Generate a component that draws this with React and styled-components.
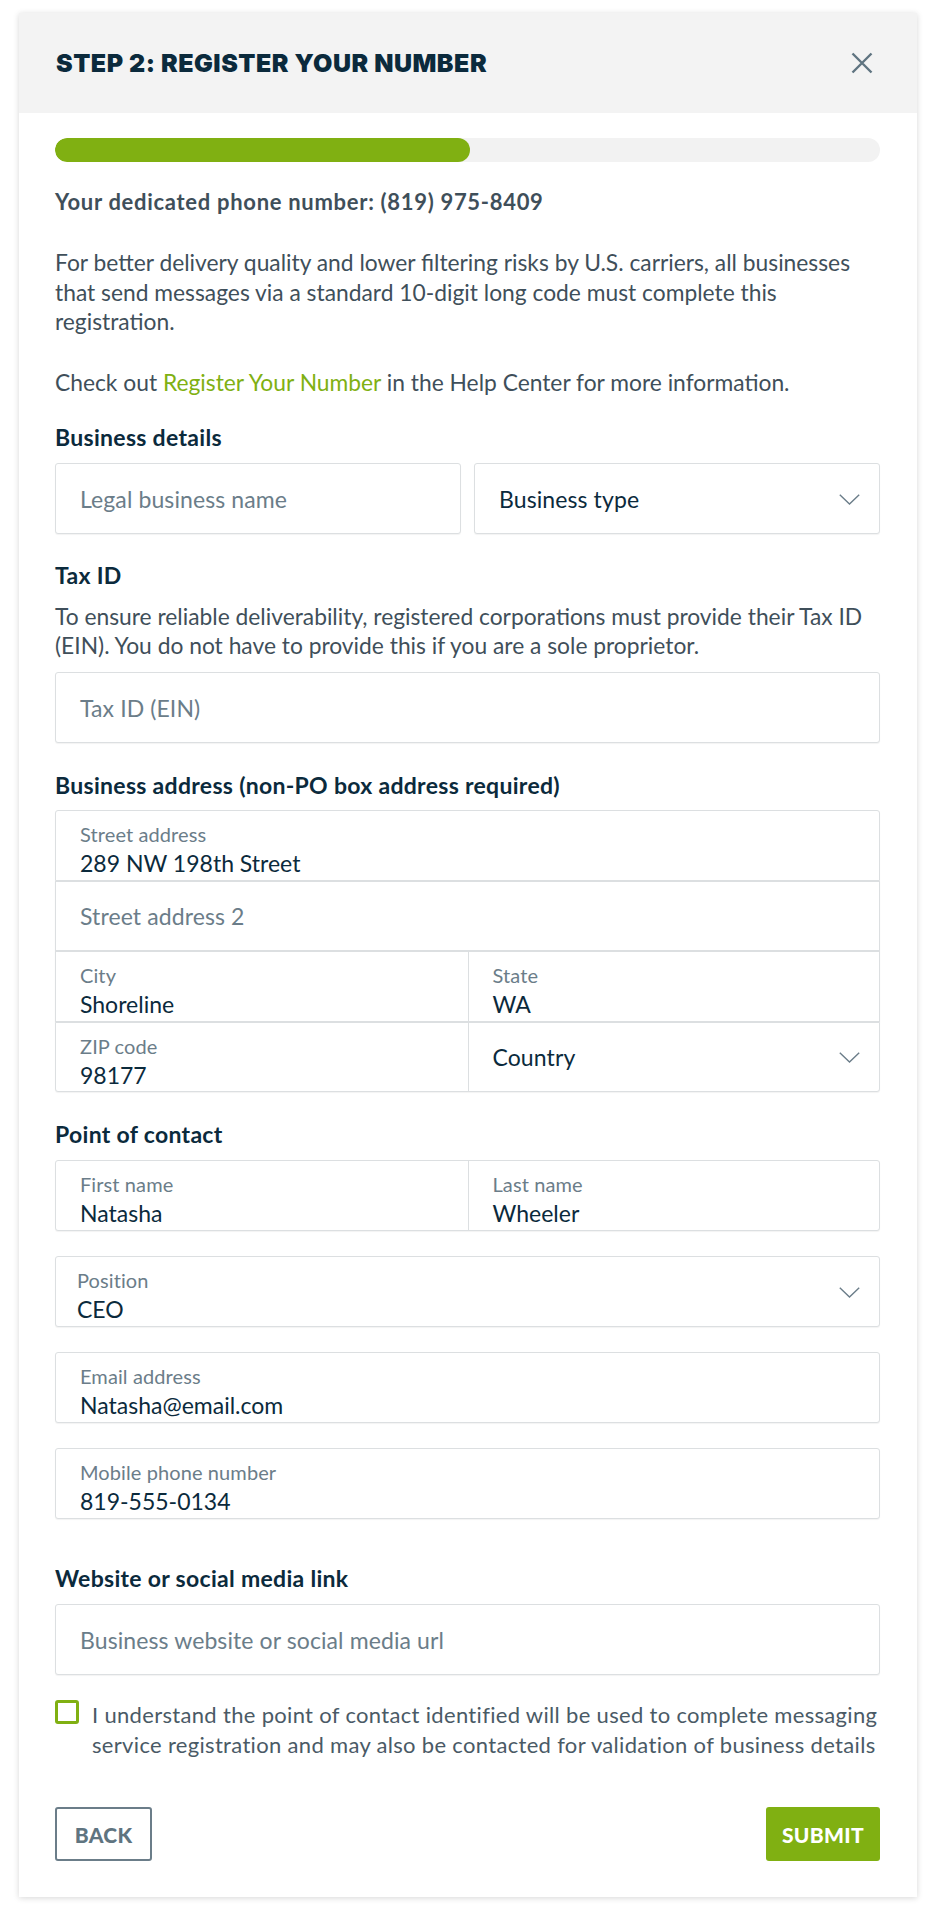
import React from "react";
import styled, { createGlobalStyle } from "styled-components";

const GlobalStyle = createGlobalStyle`
  * { box-sizing: border-box; }
  html, body { margin: 0; padding: 0; background: #ffffff; }
  body { font-family: Lato, "Open Sans", Arial, sans-serif; color: #3f4f5a; }
`;

const Page = styled.div`
  padding: 13px 20px 27px 19px;
`;

const Card = styled.section`
  width: 898px;
  background: #ffffff;
  box-shadow: 0 1px 6px rgba(0, 0, 0, 0.16);
`;

const Header = styled.header`
  height: 100px;
  background: #f3f3f3;
  padding: 0 44px 0 37px;
  display: flex;
  align-items: center;
  justify-content: space-between;
`;

const Title = styled.h1`
  margin: 0;
  font-family: Inter, Lato, sans-serif;
  font-weight: 900;
  font-size: 25px;
  letter-spacing: 0.5px;
  color: #0b2a3c;
  text-transform: uppercase;
`;

const CloseButton = styled.button`
  border: 0;
  background: transparent;
  padding: 0;
  width: 22px;
  height: 22px;
  display: flex;
  align-items: center;
  justify-content: center;
  cursor: pointer;
`;

const Body = styled.div`
  padding: 25px 37px 36px 36px;
`;

const ProgressTrack = styled.div`
  height: 24px;
  border-radius: 12px;
  background: #f2f2f2;
  overflow: hidden;
`;

const ProgressFill = styled.div`
  height: 100%;
  border-radius: 12px;
  background: #80b012;
`;

const Lead = styled.p`
  margin: 25px 0 0;
  font-size: 22px;
  letter-spacing: 0.7px;
  line-height: 30px;
  font-weight: 700;
  color: #3f4f5a;
`;

const Paragraph = styled.p`
  margin: ${(p) => p.$top || 31}px 0 0;
  font-size: 22.8px;
  line-height: ${(p) => p.$lh || 29.5}px;
  color: #3f4f5a;
`;

const Link = styled.a`
  color: #80b012;
  text-decoration: none;
`;

const SectionTitle = styled.h2`
  margin: ${(p) => p.$top}px 0 0;
  font-size: 23px;
  letter-spacing: 0.3px;
  line-height: 30px;
  font-weight: 700;
  color: #0b2a3c;
`;

const Row = styled.div`
  margin-top: ${(p) => p.$top || 0}px;
  display: grid;
  grid-template-columns: 1fr 1fr;
  gap: 13px;
`;

const Box = styled.div`
  margin-top: ${(p) => p.$top || 0}px;
  border: 1px solid #dcdfe1;
  border-radius: 3px;
  box-shadow: 0 1px 1px rgba(0, 0, 0, 0.05);
  background: #ffffff;
`;

const SplitBox = styled(Box)`
  display: grid;
  grid-template-columns: 1fr 1fr;
`;

const Group = styled.div`
  margin-top: ${(p) => p.$top || 0}px;
  display: flex;
  flex-direction: column;
`;

const GroupRow = styled.div`
  height: 70.5px;
  border: 1px solid #dcdfe1;
  box-shadow: 0 1px 1px rgba(0, 0, 0, 0.05);
  background: #ffffff;
  display: grid;
  grid-template-columns: ${(p) => (p.$split ? "1fr 1fr" : "1fr")};
  &:first-child { border-radius: 3px 3px 0 0; }
  &:last-child { border-radius: 0 0 3px 3px; }
`;

const Cell = styled.div`
  position: relative;
  height: ${(p) => (p.$h ? `${p.$h}px` : "100%")};
  padding: 0 ${(p) => (p.$right ? 60 : 24)}px 0 ${(p) => p.$inset || 24}px;
  display: flex;
  flex-direction: column;
  justify-content: ${(p) => (p.$stacked ? "flex-start" : "center")};
  padding-top: ${(p) => (p.$stacked ? 13 : 0)}px;
  & + & { border-left: 1px solid #dcdfe1; }
`;

const Label = styled.span`
  font-size: 20px;
  letter-spacing: 0.1px;
  line-height: 20px;
  color: #6b7d89;
`;

const Value = styled.span`
  margin-top: 5px;
  font-size: 23px;
  line-height: 28px;
  color: #0b2a3c;
`;

const Placeholder = styled.span`
  font-size: 23px;
  letter-spacing: 0.1px;
  line-height: 28px;
  color: #6b7d89;
`;

const SelectText = styled.span`
  font-size: 23px;
  letter-spacing: 0.1px;
  line-height: 28px;
  color: #0b2a3c;
`;

const Chevron = styled.svg`
  position: absolute;
  right: 19px;
  top: 50%;
  margin-top: -5px;
  width: 21px;
  height: 11px;
`;

const CheckRow = styled.label`
  margin-top: 25px;
  display: flex;
  align-items: flex-start;
  gap: 13px;
`;

const Checkbox = styled.span`
  flex: 0 0 24px;
  width: 24px;
  height: 24px;
  border: 3px solid #80b012;
  border-radius: 3px;
  background: #ffffff;
`;

const CheckText = styled.span`
  font-size: 22px;
  letter-spacing: 0.32px;
  line-height: 29.5px;
  color: #4a5a66;
`;

const Actions = styled.div`
  margin-top: 48px;
  display: flex;
  justify-content: space-between;
  align-items: center;
`;

const BaseButton = styled.button`
  height: 54px;
  border-radius: 3px;
  font-family: Lato, sans-serif;
  font-weight: 900;
  font-size: 21px;
  letter-spacing: 0.3px;
  text-transform: uppercase;
  cursor: pointer;
`;

const BackButton = styled(BaseButton)`
  width: 97px;
  border: 2px solid #6b7d89;
  background: #ffffff;
  color: #5f7480;
`;

const SubmitButton = styled(BaseButton)`
  width: 114px;
  border: 0;
  background: #80b012;
  color: #ffffff;
`;

const ChevronIcon = () => (
  <Chevron viewBox="0 0 21 11" fill="none">
    <polyline points="0.8,0.8 10.5,10 20.2,0.8" stroke="#6b7d89" strokeWidth="1.4" />
  </Chevron>
);

const CloseIcon = () => (
  <svg width="22" height="22" viewBox="0 0 22 22" fill="none">
    <path d="M1.5 1.5 L20.5 20.5 M20.5 1.5 L1.5 20.5" stroke="#5f7480" strokeWidth="2.4" strokeLinecap="butt" />
  </svg>
);

const LabeledCell = ({ label, value, inset, select }) => (
  <Cell $stacked $inset={inset} $right={select}>
    <Label>{label}</Label>
    <Value>{value}</Value>
    {select && <ChevronIcon />}
  </Cell>
);

export default function App() {
  return (
    <Page>
      <GlobalStyle />
      <Card>
        <Header>
          <Title>Step 2: Register your number</Title>
          <CloseButton aria-label="Close">
            <CloseIcon />
          </CloseButton>
        </Header>
        <Body>
          <ProgressTrack>
            <ProgressFill style={{ width: "50.3%" }} />
          </ProgressTrack>

          <Lead>Your dedicated phone number: (819) 975-8409</Lead>
          <Paragraph>
            For better delivery quality and lower filtering risks by U.S. carriers, all businesses
            that send messages via a standard 10-digit long code must complete this registration.
          </Paragraph>
          <Paragraph>
            Check out <Link href="#">Register Your Number</Link> in the Help Center for more
            information.
          </Paragraph>

          <SectionTitle $top={25}>Business details</SectionTitle>
          <Row $top={11}>
            <Box>
              <Cell $h={69}>
                <Placeholder>Legal business name</Placeholder>
              </Cell>
            </Box>
            <Box>
              <Cell $h={69} $right>
                <SelectText>Business type</SelectText>
                <ChevronIcon />
              </Cell>
            </Box>
          </Row>

          <SectionTitle $top={26}>Tax ID</SectionTitle>
          <Paragraph $top={12} $lh={29}>
            To ensure reliable deliverability, registered corporations must provide their Tax ID
            (EIN). You do not have to provide this if you are a sole proprietor.
          </Paragraph>
          <Box $top={12}>
            <Cell $h={69}>
              <Placeholder>Tax ID (EIN)</Placeholder>
            </Cell>
          </Box>

          <SectionTitle $top={27}>Business address (non-PO box address required)</SectionTitle>
          <Group $top={10}>
            <GroupRow>
              <LabeledCell label="Street address" value="289 NW 198th Street" />
            </GroupRow>
            <GroupRow>
              <Cell>
                <Placeholder>Street address 2</Placeholder>
              </Cell>
            </GroupRow>
            <GroupRow $split>
              <LabeledCell label="City" value="Shoreline" />
              <LabeledCell label="State" value="WA" />
            </GroupRow>
            <GroupRow $split>
              <LabeledCell label="ZIP code" value="98177" />
              <Cell $right>
                <SelectText>Country</SelectText>
                <ChevronIcon />
              </Cell>
            </GroupRow>
          </Group>

          <SectionTitle $top={27}>Point of contact</SectionTitle>
          <SplitBox $top={11}>
            <Cell $h={69} $stacked>
              <Label>First name</Label>
              <Value>Natasha</Value>
            </Cell>
            <Cell $h={69} $stacked>
              <Label>Last name</Label>
              <Value>Wheeler</Value>
            </Cell>
          </SplitBox>
          <Box $top={25}>
            <Cell $h={69} $stacked $inset={21} $right>
              <Label>Position</Label>
              <Value>CEO</Value>
              <ChevronIcon />
            </Cell>
          </Box>
          <Box $top={25}>
            <Cell $h={69} $stacked>
              <Label>Email address</Label>
              <Value>Natasha@email.com</Value>
            </Cell>
          </Box>
          <Box $top={25}>
            <Cell $h={69} $stacked>
              <Label>Mobile phone number</Label>
              <Value>819-555-0134</Value>
            </Cell>
          </Box>

          <SectionTitle $top={44}>Website or social media link</SectionTitle>
          <Box $top={11}>
            <Cell $h={69}>
              <Placeholder>Business website or social media url</Placeholder>
            </Cell>
          </Box>

          <CheckRow>
            <Checkbox />
            <CheckText>
              I understand the point of contact identified will be used to complete messaging
              service registration and may also be contacted for validation of business details
            </CheckText>
          </CheckRow>

          <Actions>
            <BackButton type="button">Back</BackButton>
            <SubmitButton type="button">Submit</SubmitButton>
          </Actions>
        </Body>
      </Card>
    </Page>
  );
}
